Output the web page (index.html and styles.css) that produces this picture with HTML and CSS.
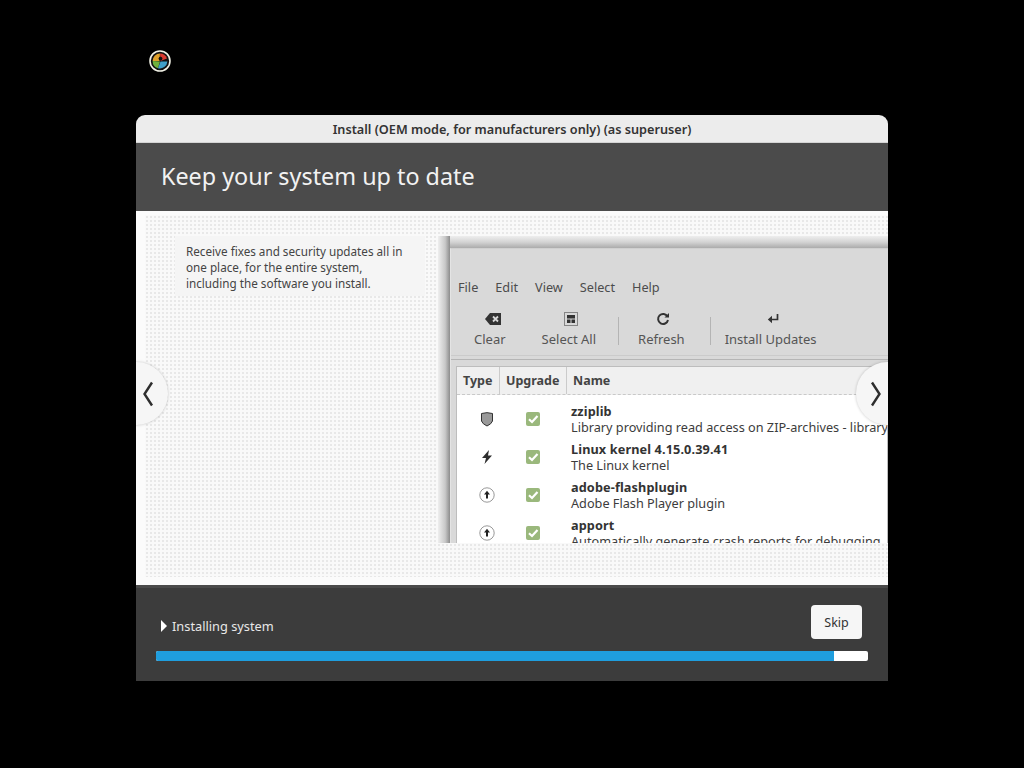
FILE: index.html
```html
<!DOCTYPE html>
<html lang="en">
<head>
<meta charset="utf-8">
<title>Install</title>
<link rel="stylesheet" href="styles.css">
</head>
<body>
<svg class="logo" width="22" height="22" viewBox="0 0 22 22">
  <circle cx="11" cy="11" r="10" fill="#111" stroke="#f2f2e6" stroke-width="1.6"/>
  <path d="M11 3.5A7.5 7.5 0 0 1 18 8.5L11.5 11Z" fill="#d8392f"/>
  <path d="M11 3.5A7.5 7.5 0 0 0 3.6 11L10.5 11Z" fill="#e0a02a"/>
  <path d="M3.6 11A7.5 7.5 0 0 0 9 18.2L11 11.5Z" fill="#6fb03c"/>
  <path d="M9 18.2A7.5 7.5 0 0 0 18.4 11.5L11.5 11.5Z" fill="#3f9fc9"/>
  <circle cx="11.5" cy="8.6" r="1.9" fill="#111"/>
</svg>
<main class="window">
  <div class="titlebar">Install (OEM mode, for manufacturers only) (as superuser)</div>
  <header class="banner"><h1>Keep your system up to date</h1></header>
  <section class="slide">
    <div class="pattern">
      <p class="blurb">Receive fixes and security updates all in one place, for the entire system, including the software you install.</p>
      <div class="shot-shadow">
        <div class="shot">
          <nav class="menubar"><span>File</span><span>Edit</span><span>View</span><span>Select</span><span>Help</span></nav>
          <div class="toolbar">
            <div class="tool tool-clear">
              <svg class="icon-clear" width="18" height="14" viewBox="0 0 18 14"><path d="M6 1H17V13H6L1 7Z" fill="#333"/><path d="M9 4.5L14 9.5M14 4.5L9 9.5" stroke="#d8d8d8" stroke-width="1.8"/></svg>
              <span>Clear</span>
            </div>
            <div class="tool tool-all">
              <svg width="14" height="14" viewBox="0 0 14 14"><rect x=".5" y=".5" width="13" height="13" fill="none" stroke="#333" stroke-dasharray="1 1"/><path d="M3 3H11V6.5H3ZM3 7.5H6.5V11H3ZM7.5 7.5H11V11H7.5Z" fill="#333"/></svg>
              <span>Select All</span>
            </div>
            <i class="sep sep-a"></i>
            <div class="tool tool-refresh">
              <svg width="14" height="14" viewBox="0 0 14 14"><path d="M11.5 4.5A5 5 0 1 0 12 8" fill="none" stroke="#333" stroke-width="2"/><path d="M8.5 5.5H13V1Z" fill="#333"/></svg>
              <span>Refresh</span>
            </div>
            <i class="sep sep-b"></i>
            <div class="tool tool-install">
              <svg width="14" height="14" viewBox="0 0 14 14"><path d="M11.5 2V7.5H5" fill="none" stroke="#333" stroke-width="1.7"/><path d="M6 3.8V11.2L1.8 7.5Z" fill="#333"/></svg>
              <span>Install Updates</span>
            </div>
          </div>
          <div class="table">
            <div class="thead"><b class="c-type">Type</b><b class="c-upg">Upgrade</b><b class="c-name">Name</b></div>
            <div class="row">
              <div class="c-type"><svg width="14" height="16" viewBox="0 0 14 16"><path d="M1.5 2.5Q7 .8 12.5 2.5V10Q11.5 13 7 15Q2.5 13 1.5 10Z" fill="#999" stroke="#333" stroke-width="1"/></svg></div>
              <div class="c-upg"><span class="check"><svg width="14" height="14" viewBox="0 0 14 14"><path d="M3 7.2L6 10L11.5 4" fill="none" stroke="#fff" stroke-width="2.2"/></svg></span></div>
              <div class="c-name"><b>zziplib</b><span>Library providing read access on ZIP-archives - library</span></div>
            </div>
            <div class="row">
              <div class="c-type"><svg width="12" height="16" viewBox="0 0 12 16"><path d="M8 1L1 9H5L3.5 15L11 6.5H7Z" fill="#2d2d2d"/></svg></div>
              <div class="c-upg"><span class="check"><svg width="14" height="14" viewBox="0 0 14 14"><path d="M3 7.2L6 10L11.5 4" fill="none" stroke="#fff" stroke-width="2.2"/></svg></span></div>
              <div class="c-name"><b>Linux kernel 4.15.0.39.41</b><span>The Linux kernel</span></div>
            </div>
            <div class="row">
              <div class="c-type"><svg width="16" height="16" viewBox="0 0 16 16"><circle cx="8" cy="8" r="7.2" fill="#fff" stroke="#999"/><path d="M8 3.8L11 7.4H9V11.5H7V7.4H5Z" fill="#222"/></svg></div>
              <div class="c-upg"><span class="check"><svg width="14" height="14" viewBox="0 0 14 14"><path d="M3 7.2L6 10L11.5 4" fill="none" stroke="#fff" stroke-width="2.2"/></svg></span></div>
              <div class="c-name"><b>adobe-flashplugin</b><span>Adobe Flash Player plugin</span></div>
            </div>
            <div class="row">
              <div class="c-type"><svg width="16" height="16" viewBox="0 0 16 16"><circle cx="8" cy="8" r="7.2" fill="#fff" stroke="#999"/><path d="M8 3.8L11 7.4H9V11.5H7V7.4H5Z" fill="#222"/></svg></div>
              <div class="c-upg"><span class="check"><svg width="14" height="14" viewBox="0 0 14 14"><path d="M3 7.2L6 10L11.5 4" fill="none" stroke="#fff" stroke-width="2.2"/></svg></span></div>
              <div class="c-name"><b>apport</b><span>Automatically generate crash reports for debugging</span></div>
            </div>
          </div>
        </div>
      </div>
    </div>
    <div class="arrow arrow-left"><svg width="12" height="26" viewBox="0 0 12 26"><path d="M10 1.5L2.5 13L10 24.5" fill="none" stroke="#2e2e2e" stroke-width="2.4"/></svg></div>
    <div class="arrow arrow-right"><svg width="12" height="26" viewBox="0 0 12 26"><path d="M2 1.5L9.5 13L2 24.5" fill="none" stroke="#2e2e2e" stroke-width="2.4"/></svg></div>
  </section>
  <footer class="footer">
    <div class="status">
      <div class="label"><i class="tri"></i><span>Installing system</span></div>
      <button class="skip">Skip</button>
    </div>
    <div class="progress"><div class="fill"></div></div>
  </footer>
</main>
</body>
</html>
```
FILE: styles.css
```css
* { box-sizing: border-box; }
html, body { margin: 0; height: 100%; background: #000; }
body { font-family: "Noto Sans", "Open Sans", sans-serif; padding: 115px 136px 0; position: relative; }
.logo { position: absolute; left: 149px; top: 50px; }
.window { width: 752px; height: 566px; display: flex; flex-direction: column; }
.titlebar { height: 28px; flex: none; background: #ececec; border-radius: 9px 9px 0 0; border-bottom: 1px solid #d4d4d4; text-align: center; font-size: 12.7px; font-weight: 600; line-height: 28px; color: #333; }
.banner { height: 68px; flex: none; background: #4b4b4b; padding: 0 0 2px 25px; display: flex; align-items: center; }
.banner h1 { margin: 0; font-size: 23.35px; font-weight: 400; color: #f2f2f2; }
.slide { height: 374px; flex: none; background: #fbfbfb; position: relative; overflow: hidden; padding: 4px 0 8px 9px; }
.pattern { height: 100%; position: relative; background-color: #f9f9f9; background-image: radial-gradient(circle at 2px 2px, #e8e8e8 0.9px, transparent 1.4px); background-size: 4px 4px; display: flex; align-items: flex-start; padding: 21px 0 0 30px; }
.blurb { width: 250px; height: 60px; flex: none; margin: 0; padding: 7px 18px 0 11px; background: #f5f5f5; font-size: 11.7px; line-height: 16px; color: #444; }
.shot-shadow { margin-left: 13px; flex: 1; height: 307px; padding: 12px 0 0 12px; overflow: hidden; background: linear-gradient(to right, #efefef, #c8c8c8 60%, #8c8c8c) left / 12px 100% no-repeat, linear-gradient(#eeeeee, #d4d4d4 50%, #ababab) top / 100% 12px no-repeat; }
.shot { height: 295px; background: #d9d9d9; border-top: 1px solid #d0d0d0; border-left: 1px solid #e4e4e4; width: 438px; padding-top: 29px; }
.menubar { display: flex; gap: 17px; padding-left: 7px; height: 18px; align-items: center; font-size: 12.7px; color: #4c4c4c; }
.toolbar { display: flex; height: 60px; align-items: flex-start; border-bottom: 1px solid #cbcbcb; box-shadow: 0 3px 0 #d9d9d9, 0 4px 0 #b5b5b5; padding-top: 16px; }
.tool { display: flex; flex-direction: column; align-items: center; gap: 6px; font-size: 13px; color: #555; line-height: 14px; }
.tool svg { display: block; margin-left: 4px; }
.tool .icon-clear { margin-left: 6px; }
.tool-clear { margin-left: 23px; }
.tool-all { margin-left: 36px; }
.tool-refresh { margin-left: 19px; }
.tool-install { margin-left: 14px; }
.sep { width: 1px; height: 28px; margin-top: 5px; background: #b4b4b4; flex: none; }
.sep-a { margin-left: 22px; }
.sep-b { margin-left: 25px; }
.table { margin: 10px 0 0 5px; background: #fff; border: 1px solid #bdbdbd; border-bottom: 0; height: 178px; overflow: hidden; }
.thead { display: flex; height: 28px; background: #f0f0f0; border-bottom: 1px dashed #c9c9c9; font-size: 12.5px; color: #444; align-items: stretch; }
.thead b { display: flex; align-items: center; padding-left: 6px; border-right: 1px solid #cbcbcb; }
.c-type { width: 43px; flex: none; }
.c-upg { width: 67px; flex: none; }
.c-name { flex: 1; }
.thead .c-name { border-right: 0; }
.row { display: flex; height: 38px; }
.thead + .row { margin-top: 7px; }
.row .c-type { display: flex; justify-content: center; align-items: center; padding: 0 0 4px 16px; }
.row .c-upg { display: flex; justify-content: center; align-items: center; padding: 0 1px 4px 0; }
.check { width: 14px; height: 14px; background: #9ab87c; border-radius: 2px; display: block; }
.check svg { display: block; }
.row .c-name { padding-left: 4px; font-size: 12.7px; line-height: 16px; color: #3c3c3c; white-space: nowrap; margin-top: 1px; }
.row .c-name b, .row .c-name span { display: block; }
.row .c-name b { color: #333; letter-spacing: .12px; }
.arrow { position: absolute; top: 151px; width: 63px; height: 63px; border-radius: 50%; background: #f6f6f6; box-shadow: 0 0 3px rgba(0,0,0,.22); display: flex; align-items: center; }
.arrow-left { left: -31px; justify-content: flex-end; padding-right: 14px; }
.arrow-right { right: -31px; justify-content: flex-start; padding-left: 14px; }
.footer { height: 96px; flex: none; background: #3c3c3c; border-top: 3px solid #4a4a4a; padding: 17px 20px 0; }
.status { display: flex; justify-content: space-between; align-items: flex-start; padding: 0 6px 0 5px; height: 46px; }
.label { display: flex; align-items: center; gap: 5px; margin-top: 7px; color: #e8e8e8; font-size: 12.8px; height: 28px; }
.tri { width: 0; height: 0; border-left: 6px solid #fff; border-top: 6px solid transparent; border-bottom: 6px solid transparent; }
.skip { width: 51px; height: 34px; border: 0; border-radius: 4px; background: #f6f6f6; font: inherit; font-size: 12.5px; color: #333; padding: 0; }
.progress { width: 712px; height: 10px; background: #fff; border-radius: 2px; overflow: hidden; }
.fill { width: 678px; height: 100%; background: #1f9ede; }
```
